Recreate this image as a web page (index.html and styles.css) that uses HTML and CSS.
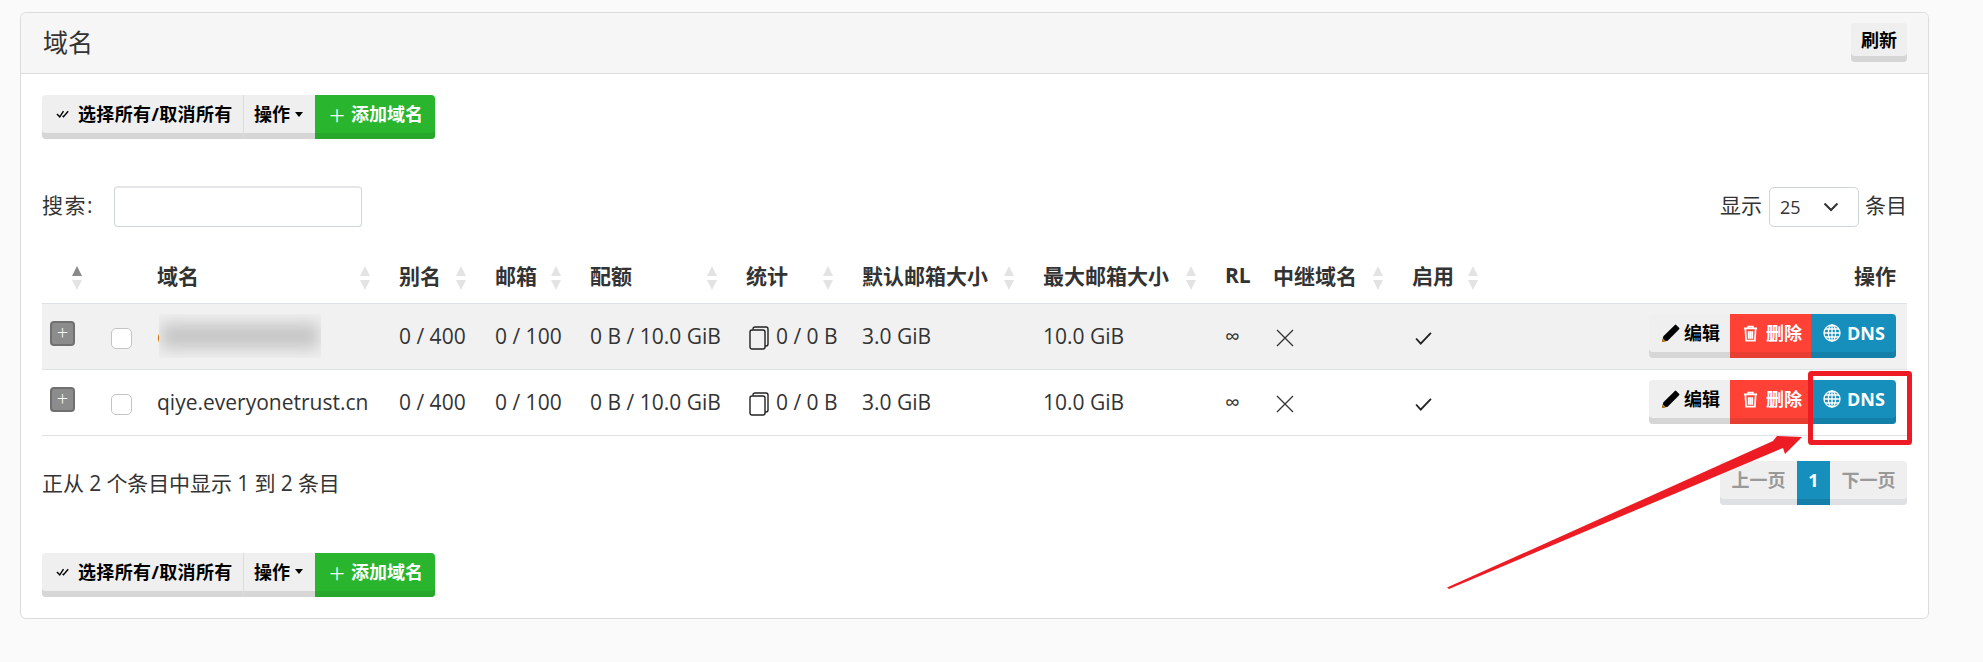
FILE: index.html
```html
<!DOCTYPE html>
<html lang="zh">
<head>
<meta charset="utf-8">
<title>域名</title>
<link rel="stylesheet" href="styles.css">
</head>
<body>
<svg width="0" height="0" class="defs">
  <symbol id="i-check2" viewBox="0 0 16 10"><path d="M1 5l3 3 4-6M7 7l1 1 5-6" fill="none" stroke="currentColor" stroke-width="1.500"/></symbol>
  <symbol id="i-pencil" viewBox="0 0 20 20"><path d="M1 19l1.500-6L13 2.500 17.500 7 7 17.500z M14.500 1 l1-.5 4 4-.5 1-1.500 1.500-4.500-4.500z" fill="#000"/><path d="M1 19l1-4 3 3z" fill="#c80"/></symbol>
  <symbol id="i-trash" viewBox="0 0 16 18"><path d="M1 3.500h14M5.500 3.500V1.500h5v2M2.500 3.500l.8 13h9.400l.8-13M6 6.500v8M8 6.500v8M10 6.500v8" fill="none" stroke="currentColor" stroke-width="1.800"/></symbol>
  <symbol id="i-globe" viewBox="0 0 18 18"><g fill="none" stroke="currentColor" stroke-width="1.300"><circle cx="9" cy="9" r="8"/><ellipse cx="9" cy="9" rx="3.600" ry="8"/><path d="M9 1v16M1 9h16M2 5h14M2 13h14"/></g></symbol>
  <symbol id="i-copy" viewBox="0 0 20 24"><g fill="none" stroke="currentColor" stroke-width="1.400"><rect x="1" y="4" width="15" height="19" rx="2"/><path d="M4 3.500V3a2 2 0 0 1 2-2h11a2 2 0 0 1 2 2v15a2 2 0 0 1-2 2h-1"/></g></symbol>
  <symbol id="i-x" viewBox="0 0 18 18"><path d="M1 1l16 16M17 1L1 17" fill="none" stroke="currentColor" stroke-width="1.300"/></symbol>
  <symbol id="i-ok" viewBox="0 0 18 14"><path d="M1 7l5 5.500L17 1" fill="none" stroke="currentColor" stroke-width="2"/></symbol>
</svg>

<section class="card">
  <header class="card-head">
    <h1 class="title">域名</h1>
    <button class="btn btn-default btn-refresh">刷新</button>
  </header>
  <div class="card-body">
    <div class="toolbar">
      <button class="btn btn-default seg-first"><svg class="ic-check2"><use href="#i-check2"/></svg><span class="wide">选择所有/取消所有</span></button>
      <button class="btn btn-default seg-mid">操作<span class="caret"></span></button>
      <button class="btn btn-green seg-last"><span class="plus">+</span>添加域名</button>
    </div>

    <div class="filters">
      <label class="search"><span class="search-label">搜索:</span><input class="search-input" type="text"></label>
      <div class="length"><span class="len-text">显示</span><span class="select"><span>25</span><svg class="chev" viewBox="0 0 16 10"><path d="M1.500 1.500L8 8l6.500-6.500" fill="none" stroke="#333" stroke-width="2"/></svg></span><span class="len-text">条目</span></div>
    </div>

    <table class="grid">
      <colgroup>
        <col class="c1"><col class="c2"><col class="c3"><col class="c4"><col class="c5"><col class="c6"><col class="c7"><col class="c8"><col class="c9"><col class="c10"><col class="c11"><col class="c12"><col class="c13">
      </colgroup>
      <thead>
        <tr>
          <th class="sort sort-first"><span class="arrows active"></span></th>
          <th></th>
          <th class="sort">域名<span class="arrows"></span></th>
          <th class="sort">别名<span class="arrows"></span></th>
          <th class="sort">邮箱<span class="arrows"></span></th>
          <th class="sort">配额<span class="arrows"></span></th>
          <th class="sort">统计<span class="arrows"></span></th>
          <th class="sort">默认邮箱大小<span class="arrows"></span></th>
          <th class="sort">最大邮箱大小<span class="arrows"></span></th>
          <th>RL</th>
          <th class="sort">中继域名<span class="arrows"></span></th>
          <th class="sort sort-left">启用<span class="arrows"></span></th>
          <th class="right">操作</th>
        </tr>
      </thead>
      <tbody>
        <tr class="odd">
          <td class="cell-exp"><span class="expand">+</span></td>
          <td class="cell-chk"><span class="check"></span></td>
          <td class="domain"><span class="hidden-name">q<span class="blur-box"></span></span></td>
          <td>0 / 400</td>
          <td>0 / 100</td>
          <td>0 B / 10.0 GiB</td>
          <td class="stat"><svg class="ic-copy"><use href="#i-copy"/></svg>0 / 0 B</td>
          <td>3.0 GiB</td>
          <td>10.0 GiB</td>
          <td class="inf">∞</td>
          <td><svg class="ic-x"><use href="#i-x"/></svg></td>
          <td><svg class="ic-ok"><use href="#i-ok"/></svg></td>
          <td class="actions">
            <div class="row-btns">
              <button class="btn btn-default seg-first act"><svg class="ic-pen"><use href="#i-pencil"/></svg>编辑</button>
              <button class="btn btn-red act"><svg class="ic-trash"><use href="#i-trash"/></svg>删除</button>
              <button class="btn btn-blue seg-last act"><svg class="ic-globe"><use href="#i-globe"/></svg>DNS</button>
            </div>
          </td>
        </tr>
        <tr>
          <td class="cell-exp"><span class="expand">+</span></td>
          <td class="cell-chk"><span class="check"></span></td>
          <td class="domain">qiye.everyonetrust.cn</td>
          <td>0 / 400</td>
          <td>0 / 100</td>
          <td>0 B / 10.0 GiB</td>
          <td class="stat"><svg class="ic-copy"><use href="#i-copy"/></svg>0 / 0 B</td>
          <td>3.0 GiB</td>
          <td>10.0 GiB</td>
          <td class="inf">∞</td>
          <td><svg class="ic-x"><use href="#i-x"/></svg></td>
          <td><svg class="ic-ok"><use href="#i-ok"/></svg></td>
          <td class="actions">
            <div class="row-btns">
              <button class="btn btn-default seg-first act"><svg class="ic-pen"><use href="#i-pencil"/></svg>编辑</button>
              <button class="btn btn-red act"><svg class="ic-trash"><use href="#i-trash"/></svg>删除</button>
              <button class="btn btn-blue seg-last act"><svg class="ic-globe"><use href="#i-globe"/></svg>DNS</button>
            </div>
          </td>
        </tr>
      </tbody>
    </table>

    <div class="table-foot">
      <div class="info">正从 2 个条目中显示 1 到 2 条目</div>
      <div class="pager">
        <button class="btn btn-pager seg-first">上一页</button>
        <button class="btn btn-blue btn-page">1</button>
        <button class="btn btn-pager seg-last">下一页</button>
      </div>
    </div>

    <div class="toolbar toolbar-bottom">
      <button class="btn btn-default seg-first"><svg class="ic-check2"><use href="#i-check2"/></svg><span class="wide">选择所有/取消所有</span></button>
      <button class="btn btn-default seg-mid">操作<span class="caret"></span></button>
      <button class="btn btn-green seg-last"><span class="plus">+</span>添加域名</button>
    </div>
  </div>
</section>

<svg class="annotation" viewBox="0 0 1983 662" width="1983" height="662">
  <rect x="1810.500" y="373.500" width="99" height="69" rx="1" fill="none" stroke="#ed1c24" stroke-width="5"/>
  <path d="M1447 587.500L1773 441 1777 436 1802 437 1785 454 1783 448 1449 589z" fill="#ed1c24"/>
</svg>
</body>
</html>
```

FILE: styles.css
```css
* { box-sizing: border-box; }
html, body { margin: 0; padding: 0; }
body {
  width: 1983px;
  height: 662px;
  overflow: hidden;
  background: #fafafa;
  color: #333;
  font-family: "Open Sans", "Noto Sans CJK SC", sans-serif;
  font-size: 21px;
  position: relative;
  padding: 12px 55px 0 20px;
}
.defs { position: absolute; }
.card {
  width: 1909px;
  height: 607px;
  background: #fff;
  border: 1px solid #dcdcdc;
  border-radius: 6px;
}
.card-head {
  height: 61px;
  background: #f6f6f6;
  border-bottom: 1px solid #dcdcdc;
  border-radius: 6px 6px 0 0;
  display: flex;
  align-items: flex-start;
  justify-content: space-between;
  padding: 10px 21px 0 22px;
}
.title {
  margin: 0;
  font-size: 25px;
  font-weight: 400;
  line-height: 38px;
  color: #333;
}
.btn {
  border: 0;
  margin: 0;
  font-family: "Open Sans", "Noto Sans CJK SC", sans-serif;
  font-weight: 700;
  font-size: 18px;
  height: 44px;
  line-height: 38px;
  padding: 0 14px 6px;
  display: inline-flex;
  align-items: center;
  white-space: nowrap;
}
.btn-default { background: #efefef; color: #000; box-shadow: inset 0 -6px 0 #d6d6d6; }
.btn-green { background: #29b52d; color: #fff; box-shadow: inset 0 -6px 0 #27a82b; }
.btn-red { background: #ff4136; color: #fff; box-shadow: inset 0 -6px 0 #e83e32; }
.btn-blue { background: #168fbd; color: #fff; box-shadow: inset 0 -6px 0 #1480a9; }
.btn-pager { background: #efefef; color: #999; box-shadow: inset 0 -6px 0 #dee0e3; }
.btn-refresh { width: 56px; height: 39px; padding: 0 0 6px; justify-content: center; border-radius: 4px; }
.seg-first { border-radius: 4px 0 0 4px; }
.seg-last { border-radius: 0 4px 4px 0; }
.card-body { padding: 21px 21px 0 21px; }
.toolbar { display: flex; height: 44px; }
.toolbar .seg-first { width: 202px; padding-left: 14px; border-right: 1px solid #dcdcdc; }
.toolbar .seg-mid { width: 71px; padding-left: 10px; }
.toolbar .seg-last { width: 120px; padding-left: 14px; }
.wide { letter-spacing: 0.35px; }
.ic-check2 { width: 15px; height: 10px; margin-right: 7px; color: #000; flex: none; }
.caret {
  width: 0; height: 0;
  margin-left: 5px;
  border-left: 4px solid transparent;
  border-right: 4px solid transparent;
  border-top: 5px solid #000;
}
.plus { font-weight: 300; font-size: 28px; margin-right: 6px; line-height: 24px; }
.filters {
  margin-top: 47px;
  display: flex;
  justify-content: space-between;
  align-items: center;
  height: 41px;
}
.search { display: flex; align-items: center; }
.search-label { width: 72px; letter-spacing: 1.5px; padding-bottom: 5px; }
.search-input {
  width: 248px;
  height: 41px;
  border: 1px solid #ced4da;
  border-top: 2px solid #e4e6e9;
  border-radius: 4px;
  background: #fff;
}
.length { display: flex; align-items: center; }
.len-text { padding-bottom: 5px; }
.select {
  width: 90px;
  height: 40px;
  margin: 0 6px 0 7px;
  border: 1px solid #ced4da;
  border-radius: 5px;
  display: flex;
  align-items: center;
  justify-content: space-between;
  padding: 0 19px 0 10px;
  font-size: 18px;
}
.chev { width: 16px; height: 10px; }
.grid {
  margin-top: 14px;
  width: 1865px;
  border-collapse: collapse;
  table-layout: fixed;
}
.c1 { width: 60px; } .c2 { width: 47px; } .c3 { width: 242px; } .c4 { width: 96px; }
.c5 { width: 95px; } .c6 { width: 156px; } .c7 { width: 116px; } .c8 { width: 181px; }
.c9 { width: 182px; } .c10 { width: 48px; } .c11 { width: 139px; } .c12 { width: 90px; }
.grid th {
  height: 62px;
  padding: 6px 8px 0;
  text-align: left;
  font-size: 21px;
  font-weight: 700;
  color: #333;
  white-space: nowrap;
  position: relative;
}
.grid thead tr { border-bottom: 1px solid #dee2e6; }
.grid td {
  height: 66px;
  padding: 0 8px;
  font-size: 21px;
  color: #333;
  white-space: nowrap;
  border-bottom: 1px solid #dee2e6;
}
.grid tr.odd td { background: #f1f1f1; }
.grid th.right { text-align: right; padding-right: 11px; }
.arrows {
  position: absolute;
  right: 21px;
  top: 25px;
  width: 10px;
  height: 24px;
}
.arrows::before, .arrows::after {
  content: "";
  position: absolute;
  left: 0;
  border-left: 5px solid transparent;
  border-right: 5px solid transparent;
}
.arrows::before { top: 0; border-bottom: 10px solid #e3e3e3; }
.arrows::after { top: 14px; border-top: 10px solid #e3e3e3; }
.arrows.active::before { border-bottom-color: #8a8a8a; }
.sort-first .arrows { left: 30px; right: auto; }
.sort-left .arrows { right: auto; left: 64px; }
.grid td.cell-exp { padding: 0 0 0 8px; }
.expand {
  display: block;
  width: 25px;
  height: 25px;
  margin-top: -6px;
  background: #8c8c8c;
  border: 2px solid #707070;
  border-radius: 4px;
  color: #fff;
  font-size: 20px;
  line-height: 19px;
  text-align: center;
  font-weight: 300;
}
.grid td.cell-chk { padding: 0 0 0 9px; }
.check {
  display: block;
  width: 21px;
  height: 21px;
  margin-top: 4px;
  background: #fff;
  border: 1px solid #c4c4c4;
  border-radius: 5px;
}
.hidden-name { position: relative; color: #a05a20; display: block; }
.blur-box {
  position: absolute;
  left: 2px;
  top: -8px;
  width: 162px;
  height: 44px;
  background: #f0f0f0;
  overflow: hidden;
}
.blur-box::before {
  content: "";
  position: absolute;
  left: 2px;
  right: 2px;
  top: 9px;
  bottom: 9px;
  background: #c6c6c6;
  filter: blur(8px);
}
.ic-copy { width: 20px; height: 24px; vertical-align: -6px; color: #222; margin: 0 7px 0 3px; }
.inf { font-size: 16px; }
.ic-x { width: 18px; height: 18px; vertical-align: middle; color: #333; margin-left: 3px; }
.ic-ok { width: 17px; height: 13px; vertical-align: middle; color: #222; margin-left: 3px; }
.grid td.actions { padding: 0 11px 0 0; }
.row-btns { display: flex; justify-content: flex-end; }
.act { height: 44px; }
.act.btn-default { width: 81px; padding-left: 12px; }
.act.btn-red { width: 81px; padding-left: 13px; }
.act.btn-blue { width: 85px; padding-left: 12px; }
.ic-pen { width: 19px; height: 19px; margin-right: 4px; flex: none; }
.ic-trash { width: 15px; height: 17px; margin-right: 8px; flex: none; color: #fff; }
.ic-globe { width: 18px; height: 18px; margin-right: 6px; flex: none; color: #fff; }
.table-foot {
  display: flex;
  justify-content: space-between;
  margin-top: 25px;
  height: 44px;
}
.info { line-height: 44px; letter-spacing: -0.1px; }
.pager { display: flex; }
.btn-pager { width: 77px; padding: 0 0 6px; justify-content: center; }
.btn-page { width: 33px; padding: 0 0 6px; justify-content: center; border-radius: 0; }
.toolbar-bottom { margin-top: 48px; }
.annotation { position: absolute; left: 0; top: 0; pointer-events: none; }
```
